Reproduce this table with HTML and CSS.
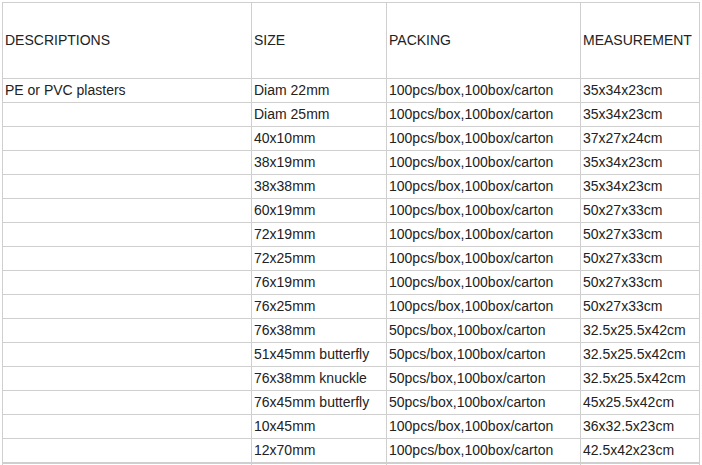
FILE: index.html
```html
<!DOCTYPE html>
<html>
<head>
<meta charset="utf-8">
<link rel="stylesheet" href="styles.css">
</head>
<body>
<table class="spec">
  <colgroup>
    <col class="c1"><col class="c2"><col class="c3"><col class="c4">
  </colgroup>
  <tr class="head"><td>DESCRIPTIONS</td><td>SIZE</td><td>PACKING</td><td>MEASUREMENT</td></tr>
  <tr><td>PE or PVC plasters</td><td>Diam 22mm</td><td>100pcs/box,100box/carton</td><td>35x34x23cm</td></tr>
  <tr><td></td><td>Diam 25mm</td><td>100pcs/box,100box/carton</td><td>35x34x23cm</td></tr>
  <tr><td></td><td>40x10mm</td><td>100pcs/box,100box/carton</td><td>37x27x24cm</td></tr>
  <tr><td></td><td>38x19mm</td><td>100pcs/box,100box/carton</td><td>35x34x23cm</td></tr>
  <tr><td></td><td>38x38mm</td><td>100pcs/box,100box/carton</td><td>35x34x23cm</td></tr>
  <tr><td></td><td>60x19mm</td><td>100pcs/box,100box/carton</td><td>50x27x33cm</td></tr>
  <tr><td></td><td>72x19mm</td><td>100pcs/box,100box/carton</td><td>50x27x33cm</td></tr>
  <tr><td></td><td>72x25mm</td><td>100pcs/box,100box/carton</td><td>50x27x33cm</td></tr>
  <tr><td></td><td>76x19mm</td><td>100pcs/box,100box/carton</td><td>50x27x33cm</td></tr>
  <tr><td></td><td>76x25mm</td><td>100pcs/box,100box/carton</td><td>50x27x33cm</td></tr>
  <tr><td></td><td>76x38mm</td><td>50pcs/box,100box/carton</td><td>32.5x25.5x42cm</td></tr>
  <tr><td></td><td>51x45mm butterfly</td><td>50pcs/box,100box/carton</td><td>32.5x25.5x42cm</td></tr>
  <tr><td></td><td>76x38mm knuckle</td><td>50pcs/box,100box/carton</td><td>32.5x25.5x42cm</td></tr>
  <tr><td></td><td>76x45mm butterfly</td><td>50pcs/box,100box/carton</td><td>45x25.5x42cm</td></tr>
  <tr><td></td><td>10x45mm</td><td>100pcs/box,100box/carton</td><td>36x32.5x23cm</td></tr>
  <tr><td></td><td>12x70mm</td><td>100pcs/box,100box/carton</td><td>42.5x42x23cm</td></tr>
  <tr class="cut"><td></td><td>&nbsp;</td><td>&nbsp;</td><td>&nbsp;</td></tr>
</table>
</body>
</html>
```

FILE: styles.css
```css
html, body {
  margin: 0;
  padding: 0;
  background: #fff;
}
body {
  padding: 2px 0 0 2px;
  font-family: "Liberation Sans", Arial, sans-serif;
  font-size: 14px;
  color: #222;
}
.spec {
  border-collapse: collapse;
  table-layout: fixed;
  width: 697px;
}
.c1 { width: 249px; }
.c2 { width: 135px; }
.c3 { width: 194px; }
.c4 { width: 119px; }
.spec td {
  border: 1px solid #cfcfcf;
  padding: 0 2px 1px;
  height: 22px;
  line-height: 16px;
  vertical-align: middle;
  white-space: nowrap;
  overflow: hidden;
}
.spec tr.head td {
  height: 74px;
}
.spec tr.cut td {
  border-top: 2px solid #cfcfcf;
}
```
